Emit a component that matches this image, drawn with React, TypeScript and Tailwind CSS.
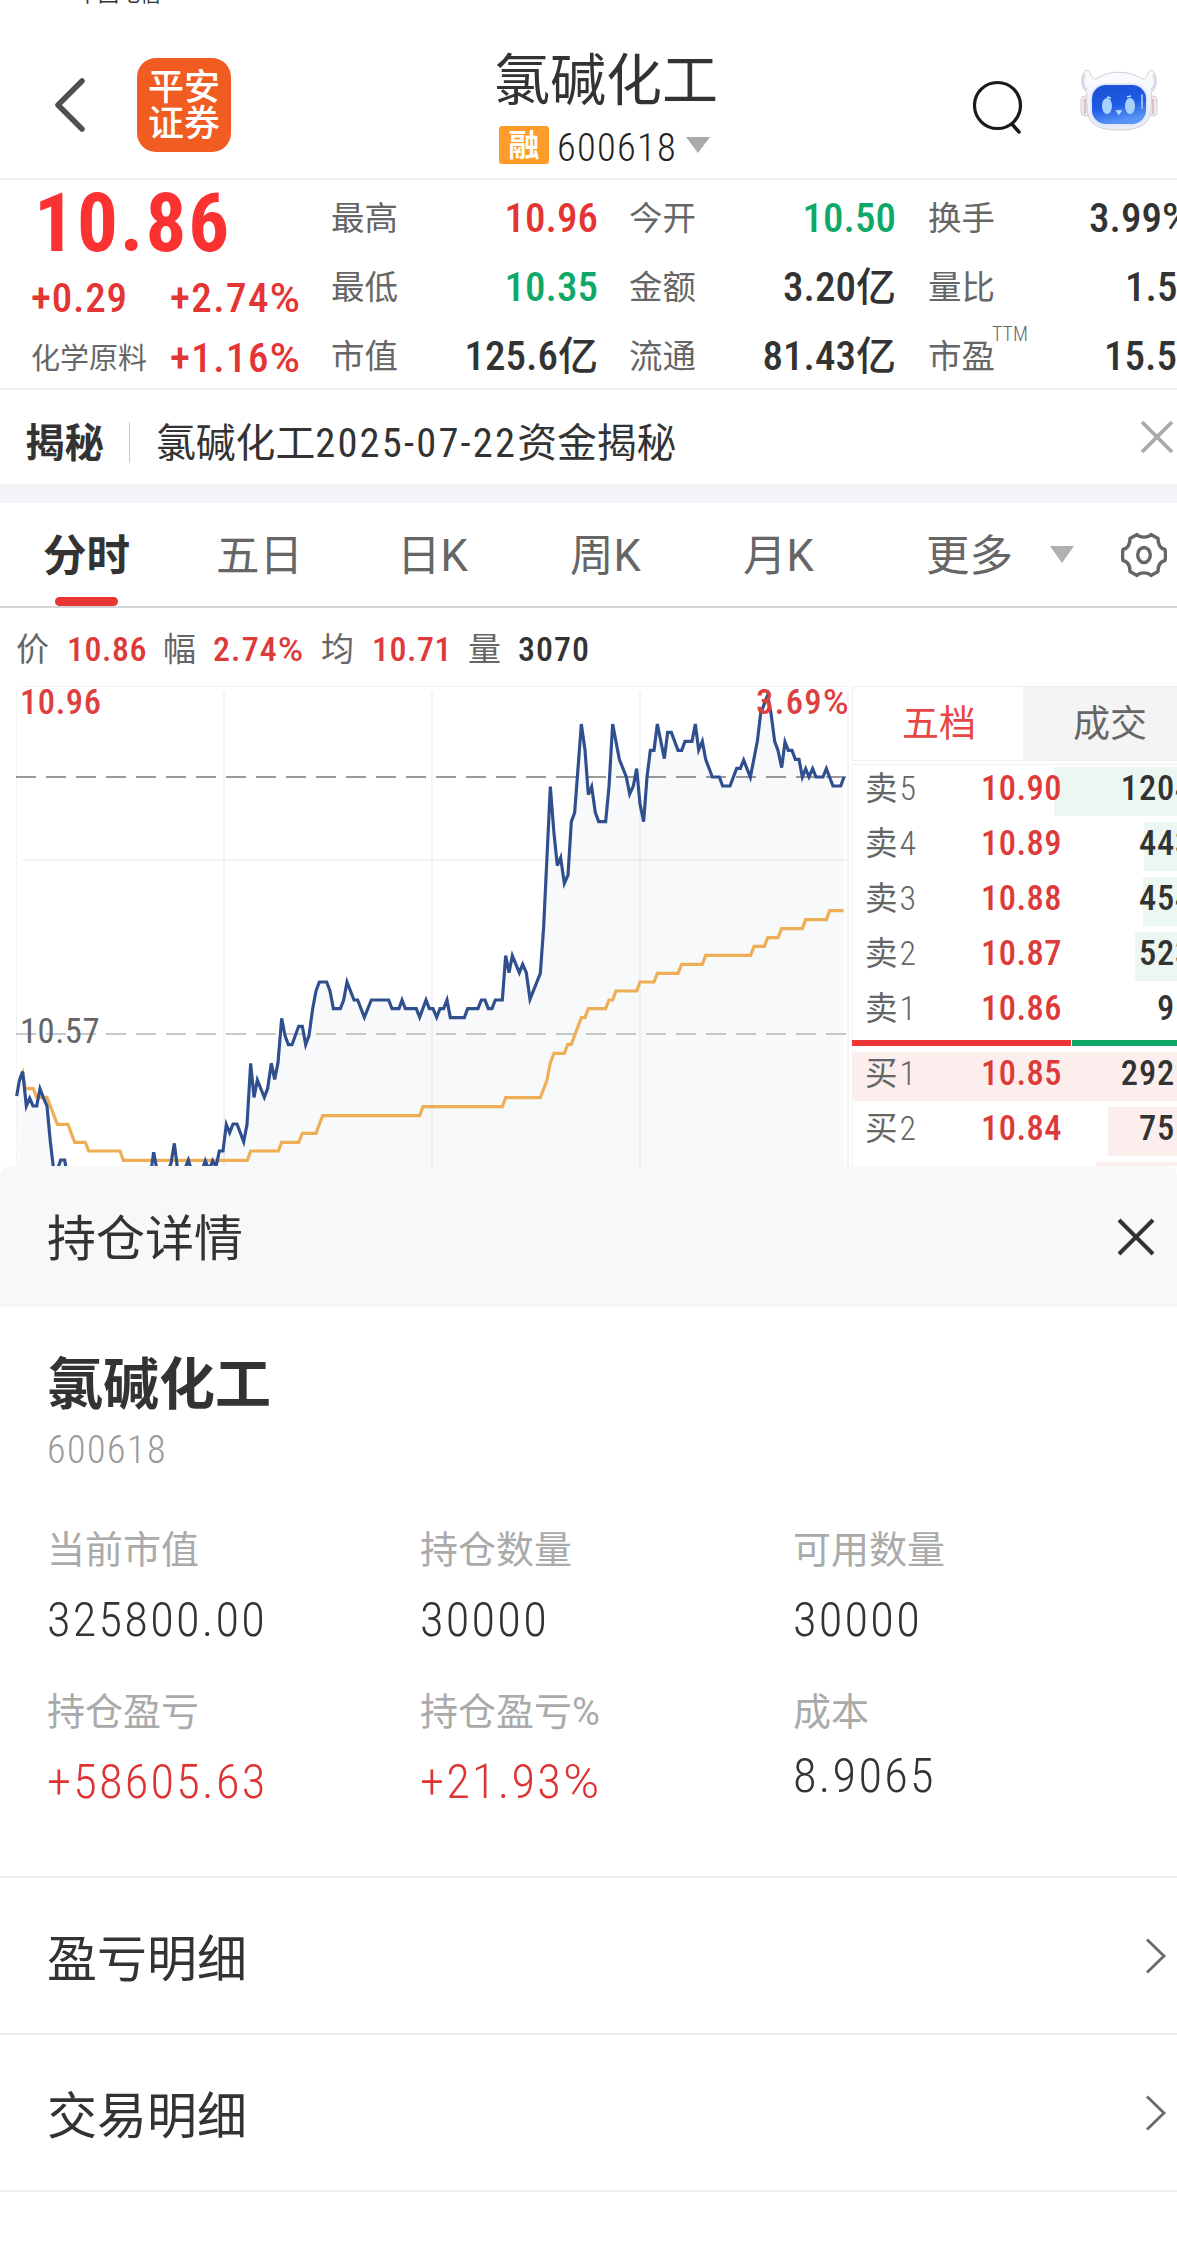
const quotes = [
  [
    { label: "最高", value: "10.96", color: "text-[#e43535]" },
    { label: "最低", value: "10.35", color: "text-[#10a868]" },
    { label: "市值", value: "125.6", unit: "亿", color: "text-[#333]" },
  ],
  [
    { label: "今开", value: "10.50", color: "text-[#10a868]" },
    { label: "金额", value: "3.20", unit: "亿", color: "text-[#333]" },
    { label: "流通", value: "81.43", unit: "亿", color: "text-[#333]" },
  ],
];

const extraQuotes = [
  { label: "换手", value: "3.99%", pad: "pl-[161px]" },
  { label: "量比", value: "1.5", pad: "pl-[197px]" },
  { label: "市盈", value: "15.5", pad: "pl-[176px]", sup: "TTM" },
];

const tabs = ["分时", "五日", "日K", "周K", "月K"];

const asks = [
  { label: "卖", level: "5", price: "10.90", qty: "120", rest: "4", bar: "w-[123px]" },
  { label: "卖", level: "4", price: "10.89", qty: "44", rest: "3", bar: "w-[33px]" },
  { label: "卖", level: "3", price: "10.88", qty: "45", rest: "4", bar: "w-[34px]" },
  { label: "卖", level: "2", price: "10.87", qty: "52", rest: "3", bar: "w-[42px]" },
  { label: "卖", level: "1", price: "10.86", qty: "9", rest: "", bar: "w-0" },
];

const bids = [
  { label: "买", level: "1", price: "10.85", qty: "292", rest: "", bar: "w-[325px]" },
  { label: "买", level: "2", price: "10.84", qty: "75", rest: "", bar: "w-[69px]" },
  { label: "", level: "", price: "", qty: "", rest: "", bar: "w-[81px]" },
];

const holdings = [
  { label: "当前市值", value: "325800.00", color: "text-[#333]" },
  { label: "持仓数量", value: "30000", color: "text-[#333]" },
  { label: "可用数量", value: "30000", color: "text-[#333]" },
  { label: "持仓盈亏", value: "+58605.63", color: "text-[#dd3333]" },
  { label: "持仓盈亏%", value: "+21.93%", color: "text-[#dd3333]" },
  { label: "成本", value: "8.9065", color: "text-[#333] relative -top-[6px]" },
];

const pricePoints =
  "50,1278 58,1232 68,1205 79,1308 89,1285 99,1308 110,1308 120,1256 131,1285 141,1308 151,1415 161,1500 172,1500 182,1470 194,1470 204,1530 445,1530 455,1490 461,1447 471,1500 505,1500 513,1480 523,1420 533,1500 555,1495 565,1470 574,1500 606,1500 616,1472 627,1500 638,1472 648,1490 658,1443 669,1443 679,1364 689,1388 699,1362 711,1362 731,1415 741,1364 752,1180 762,1282 772,1230 793,1282 803,1255 814,1180 824,1228 834,1178 845,1045 855,1097 865,1124 876,1124 896,1069 907,1069 917,1124 927,1097 938,1016 948,963 958,936 980,936 990,963 1000,1016 1021,1016 1031,990 1041,936 1062,990 1073,990 1093,1042 1114,990 1166,990 1176,1016 1197,1016 1206,990 1216,1016 1249,1016 1259,1042 1278,990 1288,1016 1299,1016 1310,1042 1320,1016 1331,1016 1341,990 1351,1043 1393,1043 1403,1016 1434,1016 1444,990 1455,990 1465,1016 1476,1016 1486,990 1507,990 1517,857 1527,908 1537,857 1558,908 1568,883 1579,908 1590,988 1621,910 1631,770 1651,350 1662,490 1672,587 1682,563 1693,640 1704,615 1714,455 1724,428 1744,162 1755,240 1765,374 1775,350 1786,428 1796,455 1817,455 1827,350 1838,162 1858,268 1879,321 1889,372 1900,348 1910,296 1920,402 1931,455 1941,321 1951,241 1962,241 1972,162 1993,266 2003,187 2014,187 2034,241 2045,241 2055,214 2076,214 2086,162 2096,240 2107,214 2117,268 2137,321 2158,321 2168,348 2190,348 2210,295 2221,295 2231,270 2251,322 2272,214 2282,130 2303,75 2313,130 2324,214 2334,241 2345,293 2355,216 2365,241 2376,241 2386,268 2397,268 2407,321 2417,296 2427,321 2438,296 2448,321 2469,321 2479,296 2499,348 2522,348 2532,321";

const averagePoints =
  "58,1232 68,1208 76,1256 100,1256 110,1282 141,1282 172,1363 204,1363 224,1417 256,1417 266,1443 360,1443 370,1471 742,1471 752,1443 835,1443 845,1417 896,1417 907,1390 948,1390 968,1337 1259,1337 1269,1310 1507,1310 1517,1283 1621,1283 1641,1230 1651,1178 1662,1150 1693,1150 1703,1123 1714,1123 1744,1043 1755,1043 1765,1016 1817,1016 1827,990 1838,990 1848,963 1910,963 1920,936 1962,936 1972,910 2034,910 2045,883 2107,883 2117,856 2252,856 2262,829 2293,829 2303,803 2334,803 2345,776 2407,776 2417,749 2479,749 2489,722 2531,722";

// digits are condensed, the percent sign keeps its full width
function Num({ children }: { children: string }) {
  if (!children.endsWith("%")) return <>{children}</>;
  return (
    <>
      {children.slice(0, -1)}
      <span className="font-[Roboto]">%</span>
    </>
  );
}

function Robot() {
  return (
    <svg width="78" height="62" viewBox="0 0 78 62" className="block">
      <defs>
        <linearGradient id="shell" x1="0" y1="0" x2="0" y2="1">
          <stop offset="0" stopColor="#fbfcfe" />
          <stop offset="1" stopColor="#e9ecf3" />
        </linearGradient>
        <linearGradient id="screen" x1="0" y1="0" x2="0.3" y2="1">
          <stop offset="0" stopColor="#1a4fd0" />
          <stop offset="0.6" stopColor="#1e5be6" />
          <stop offset="1" stopColor="#5a93f5" />
        </linearGradient>
      </defs>
      <rect x="1" y="27" width="9" height="20" rx="4" fill="#eceaf0" stroke="#cfd2dc" />
      <rect x="68" y="27" width="9" height="20" rx="4" fill="#eceaf0" stroke="#cfd2dc" />
      <path d="M5 30v15M73 30v15" stroke="#e3bdb9" strokeWidth="2" />
      <path
        d="M6 1c-7 7-5 18 1 23-1 6 0 14 1 21 2 12 13 16 31 16s29-4 31-16c1-7 2-15 1-21 6-5 8-16 1-23-6 1-3 9-10 9-13-9-33-9-46 0-7 0-4-8-10-9z"
        fill="url(#shell)"
        stroke="#cfd0d6"
        strokeWidth="1"
      />
      <path d="M5 5c-3 6-2 12 2 16M73 5c3 6 2 12-2 16" stroke="#d3dae6" strokeWidth="2" fill="none" />
      <rect x="10" y="14" width="58" height="43" rx="16" fill="#dfe8fa" />
      <rect x="12" y="16" width="54" height="39" rx="14" fill="url(#screen)" />
      <ellipse cx="27" cy="37" rx="5" ry="8" fill="#a9d2fb" />
      <ellipse cx="50" cy="37" rx="5" ry="8" fill="#a9d2fb" />
      <path d="M27 28l4 1M47 28l4-1M37 42l2 3 2-3z" stroke="#bcdcfc" strokeWidth="1.5" fill="#bcdcfc" />
      <path d="M62 26v13" stroke="#8fb6f8" strokeWidth="2" strokeLinecap="round" />
    </svg>
  );
}

function Header() {
  return (
    <header className="flex h-[180px] border-b-2 border-[#eee]">
      <div className="w-[496px] flex">
        <svg width="30" height="54" viewBox="0 0 30 54" className="ml-[55px] mt-[78px]">
          <path d="M27 3L3 27l24 24" fill="none" stroke="#4f4f4f" strokeWidth="5.5" strokeLinecap="round" strokeLinejoin="round" />
        </svg>
        <div className="ml-[52px] mt-[58px] w-[94px] h-[94px] rounded-[19px] bg-[#f15c22] text-white text-[36px] font-medium text-center pt-[12px]">
          <div className="h-[36px] leading-[36px]">平安</div>
          <div className="h-[36px] leading-[36px]">证券</div>
        </div>
      </div>
      <div className="w-[224px] pt-[53px]">
        <h1 className="text-[56px] leading-[56px] text-[#333] whitespace-nowrap -ml-[2px]">氯碱化工</h1>
        <div className="flex items-center mt-[16px] h-[40px]">
          <span className="ml-[3px] w-[50px] h-[38px] rounded-[3px] bg-[#ff9b29] text-white text-[31px] leading-[39px] font-bold text-center">融</span>
          <span className="ml-[8px] w-[120px] text-[38.500px] leading-[40px] tracking-[1.3px] font-light text-[#222] mt-[6px] font-['Roboto_Condensed',Roboto,sans-serif]">600618</span>
          <svg width="24" height="16" viewBox="0 0 24 16" className="ml-[9px]">
            <path d="M0 0h24L12 16z" fill="#aaa" />
          </svg>
        </div>
      </div>
      <svg width="50" height="54" viewBox="0 0 50 54" className="ml-[253px] mt-[80px]">
        <circle cx="24.500" cy="25.500" r="23" fill="none" stroke="#1a1a1a" strokeWidth="3.200" />
        <path d="M39 44l7 8" stroke="#1a1a1a" strokeWidth="3.500" strokeLinecap="round" />
      </svg>
      <div className="ml-[57px] mt-[69px]">
        <Robot />
      </div>
    </header>
  );
}

function Quotes() {
  return (
    <section className="flex h-[210px] border-b-2 border-[#eee] overflow-hidden whitespace-nowrap">
      <div className="w-[331px] shrink-0 text-[#e43535] font-['Roboto_Condensed',Roboto,'Noto_Sans_CJK_SC',sans-serif]">
        <div className="pl-[34px] pt-[3px] text-[81px] leading-[82px] h-[91px] font-bold tracking-[2px] text-[#fa3232]">10.86</div>
        <div className="flex text-[41px] leading-[54px] font-medium">
          <span className="w-[138px] pl-[31px] tracking-[0.8px]">+0.29</span>
          <span className="pl-[32px] tracking-[1.4px]">
            <Num>+2.74%</Num>
          </span>
        </div>
        <div className="flex items-center text-[41px] leading-[64px] font-medium">
          <span className="w-[138px] pl-[31px] pt-[2px] text-[29px] font-normal text-[#666]">化学原料</span>
          <span className="pl-[32px] tracking-[1.4px]">
            <Num>+1.16%</Num>
          </span>
        </div>
      </div>
      {quotes.map((column, i) => (
        <div key={i} className={i === 0 ? "w-[267px] mr-[31px] shrink-0 pt-[4px]" : "w-[267px] mr-[32px] shrink-0 pt-[4px]"}>
          {column.map(({ label, value, unit, color }) => (
            <div key={label} className="flex items-center justify-between h-[69px]">
              <span className="text-[33.500px] text-[#666] pt-[2px]">{label}</span>
              <span className={`text-[41px] leading-[69px] font-medium font-['Roboto_Condensed',Roboto,'Noto_Sans_CJK_SC',sans-serif] ${color}`}>
                {value}
                {unit && <span className="text-[40px]">{unit}</span>}
              </span>
            </div>
          ))}
        </div>
      ))}
      <div className="w-[248px] shrink-0 pt-[4px] font-['Roboto_Condensed',Roboto,'Noto_Sans_CJK_SC',sans-serif]">
        {extraQuotes.map(({ label, value, pad, sup }) => (
          <div key={label} className={`relative flex items-center h-[69px] text-[41px] font-medium text-[#333] ${pad}`}>
            <span className="absolute left-0 pt-[2px] text-[33.500px] font-normal text-[#666]">
              {label}
              {sup && <sup className="absolute left-[64px] -top-[5px] text-[20px] leading-[19px] font-light">{sup}</sup>}
            </span>
            <span>
              <Num>{value}</Num>
            </span>
          </div>
        ))}
      </div>
    </section>
  );
}

function OrderRow({ row, tint }: { row: (typeof asks)[number]; tint: string }) {
  return (
    <div className="relative h-[49px] mb-[6px] w-[325px] flex items-center text-[34.500px] font-medium text-[#333] leading-[44px] font-['Roboto_Condensed',Roboto,'Noto_Sans_CJK_SC',sans-serif]">
      <div className={`absolute right-0 top-0 h-[49px] ${row.bar} ${tint}`} />
      <div className="relative -top-[3px] flex w-full">
        <span className="w-[129px] pl-[13px] text-[32.500px] font-normal text-[#666]">
          {row.label}
          <span className="ml-[2px] text-[34px] font-light">{row.level}</span>
        </span>
        <span className="w-[100px] tracking-[0.5px] text-[#dd3a3a]">{row.price}</span>
        <span className="w-[94px] text-right tracking-[0.8px]">
          {row.qty}
          <span className="inline-block w-0">{row.rest}</span>
        </span>
      </div>
    </div>
  );
}

function OrderBook() {
  return (
    <aside className="w-[325px] mt-[16px] overflow-hidden">
      <div className="flex h-[75px] border border-r-0 border-[#eee] text-[37px] leading-[76px]">
        <span className="w-[170px] pl-[49px] text-[#e84545]">五档</span>
        <span className="w-[154px] pl-[50px] bg-[#f4f4f4] text-[#666]">成交</span>
      </div>
      <div className="mt-[3px] pt-[2px] border-t border-l border-[#f2f2f2]">
        <div className="-ml-px">
          {asks.map((row) => (
            <OrderRow key={row.level} row={row} tint="bg-[#ebf7f0]" />
          ))}
          <div className="flex gap-px h-[6px] mt-[-2px] mb-[6px]">
            <div className="w-[219px] bg-[#ee3636]" />
            <div className="flex-1 bg-[#10a868]" />
          </div>
          {bids.map((row) => (
            <OrderRow key={row.level} row={row} tint="bg-[#fdeeee]" />
          ))}
        </div>
      </div>
    </aside>
  );
}

function Chart() {
  return (
    <svg width="852" height="500" viewBox="0 0 2556 1500" className="block shrink-0 font-['Roboto_Condensed',Roboto,sans-serif]">
      <path d="M66 49H2547" stroke="#f1f1f1" strokeWidth="3" />
      <path d="M66 570H2547M672 66V1500M1296 66V1500M1920 66V1500M2544 66V1500" stroke="#f3f3f3" strokeWidth="6" />
      <path d="M50 66V1500" stroke="#f1f1f1" strokeWidth="3" />
      <path d="M48 321H2538" stroke="#999" strokeWidth="6" strokeDasharray="60 30" />
      <path d="M48 1092H2538" stroke="#c9c9c9" strokeWidth="6" strokeDasharray="60 30" />
      <polygon points={`${pricePoints} 2532,1500 56,1500`} fill="#3a6ea5" fillOpacity="0.045" />
      <polyline points={averagePoints} fill="none" stroke="#eeae55" strokeWidth="9.500" />
      <polyline points={pricePoints} fill="none" stroke="#304f8f" strokeWidth="9.500" />
      <g fontSize="104" letterSpacing="1.500" fontWeight="500">
        <text x="60" y="131" fill="#dd3f3f">10.96</text>
        <text x="2268" y="131" fill="#dd3f3f" letterSpacing="4">
          3.69<tspan className="font-[Roboto]">%</tspan>
        </text>
        <text x="60" y="1118" fill="#666" fontWeight="400">10.57</text>
      </g>
    </svg>
  );
}

function Market() {
  return (
    <section className="h-[663px] overflow-hidden">
      <nav className="flex items-center h-[105px] border-b-2 border-[#d5d5d5] text-[43.500px] text-[#666]">
        {tabs.map((tab, i) => (
          <div key={tab} className="relative w-[173px] h-[103px] leading-[107px] text-center">
            <span className={i === 0 ? "font-bold text-[#333]" : ""}>{tab}</span>
            {i === 0 && <i className="absolute left-[55px] bottom-0 w-[63px] h-[9px] rounded-full bg-[#ea3535]" />}
          </div>
        ))}
        <span className="ml-[61px] leading-[103px] pt-[4px]">更多</span>
        <svg width="24" height="17" viewBox="0 0 24 17" className="ml-[37px]">
          <path d="M0 0h24L12 17z" fill="#b0b0b0" />
        </svg>
        <svg width="46" height="46" viewBox="0 0 46 46" className="ml-[47px]" fill="none" stroke="#666" strokeWidth="3.400" strokeLinejoin="round">
          <path d="M16 2.500C19 6 27 6 30 2.500L37 6.500C37 12 39 16.500 44 17.500Q45 23 44 28.500C39 29.500 37 34 37 39.500L30 43.500C27 40 19 40 16 43.500L9 39.500C9 34 7 29.500 2 28.500Q1 23 2 17.500C7 16.500 9 12 9 6.500Z" />
          <ellipse cx="23" cy="23" rx="6.300" ry="7.500" />
        </svg>
      </nav>
      <div className="flex items-center h-[62px] pt-[21px] text-[34px] font-medium tracking-[0.5px] text-[#dd3a3a] whitespace-nowrap font-['Roboto_Condensed',Roboto,'Noto_Sans_CJK_SC',sans-serif]">
        <span className="w-[51px] ml-[16px] text-[33px] font-normal text-[#666]">价</span>
        <span className="w-[96px]">10.86</span>
        <span className="w-[50px] text-[33px] font-normal text-[#666]">幅</span>
        <span className="w-[108px] tracking-[1.1px]">
          <Num>2.74%</Num>
        </span>
        <span className="w-[51px] text-[33px] font-normal text-[#666]">均</span>
        <span className="w-[96px]">10.71</span>
        <span className="w-[50px] text-[33px] font-normal text-[#666]">量</span>
        <span className="tracking-[1px] text-[#333]">3070</span>
      </div>
      <div className="flex">
        <Chart />
        <OrderBook />
      </div>
    </section>
  );
}

function PositionSheet() {
  return (
    <section>
      <div className="flex items-center justify-between h-[141px] pl-[47px] pr-[22px] rounded-t-[10px] bg-[#f8f8f8]">
        <h2 className="text-[49px] text-[#333] pt-[7px]">持仓详情</h2>
        <svg width="38" height="38" viewBox="0 0 38 38">
          <path d="M2 2l34 34M36 2L2 36" stroke="#333" strokeWidth="4" />
        </svg>
      </div>
      <div className="h-[571px] border-b-2 border-[#ececec] pl-[47px] font-['Roboto_Condensed',Roboto,'Noto_Sans_CJK_SC',sans-serif]">
        <h3 className="pt-[48px] text-[56px] leading-[60px] font-bold text-[#333]">氯碱化工</h3>
        <p className="mt-[13px] text-[38px] leading-[44px] tracking-[1.5px] font-light text-[#999]">600618</p>
        <div className="grid grid-cols-[373px_373px_1fr] mt-[48px]">
          {holdings.map(({ label, value, color }) => (
            <div key={label} className="h-[162px]">
              <div className="text-[38px] leading-[60px] text-[#aaa]">
                <Num>{label}</Num>
              </div>
              <div className={`mt-[10px] text-[48.500px] leading-[60px] tracking-[2.2px] font-light ${color}`}>
                <Num>{value}</Num>
              </div>
            </div>
          ))}
        </div>
      </div>
      {["盈亏明细", "交易明细"].map((title) => (
        <div key={title} className="flex items-center justify-between h-[157px] pl-[47px] pr-[10px] border-b-2 border-[#ececec]">
          <span className="text-[50px] leading-[60px] pt-[8px] text-[#333]">{title}</span>
          <svg width="22" height="36" viewBox="0 0 22 36">
            <path d="M2 1.500L19 18 2 34.500" fill="none" stroke="#6a6a6a" strokeWidth="2.800" />
          </svg>
        </div>
      ))}
    </section>
  );
}

export default function App() {
  return (
    <div className="relative w-[1177px] h-[2263px] overflow-hidden bg-white font-[Roboto,'Noto_Sans_CJK_SC',sans-serif]">
      <div className="absolute left-[77px] -top-[16px] text-[21px] leading-[21px] text-[#333]">中国电信</div>
      <Header />
      <Quotes />
      <section className="flex items-center h-[94px] text-[39.800px] text-[#333] whitespace-nowrap">
        <strong className="ml-[25px] mr-[25px] pt-[14px] text-[39.500px]">揭秘</strong>
        <i className="w-px h-[41px] mt-[10px] bg-[#ccc]" />
        <span className="ml-[26px] pt-[13px]">
          氯碱化工<span className="text-[40.500px] tracking-[2.2px] font-['Roboto_Condensed',Roboto,sans-serif]">2025-07-22</span>资金揭秘
        </span>
        <svg width="34" height="34" viewBox="0 0 34 34" className="ml-auto mr-[3px]">
          <path d="M2 2l30 30M32 2L2 32" stroke="#aaa" strokeWidth="3.800" />
        </svg>
      </section>
      <div className="h-[19px] bg-[#f3f4f8]" />
      <Market />
      <PositionSheet />
    </div>
  );
}
